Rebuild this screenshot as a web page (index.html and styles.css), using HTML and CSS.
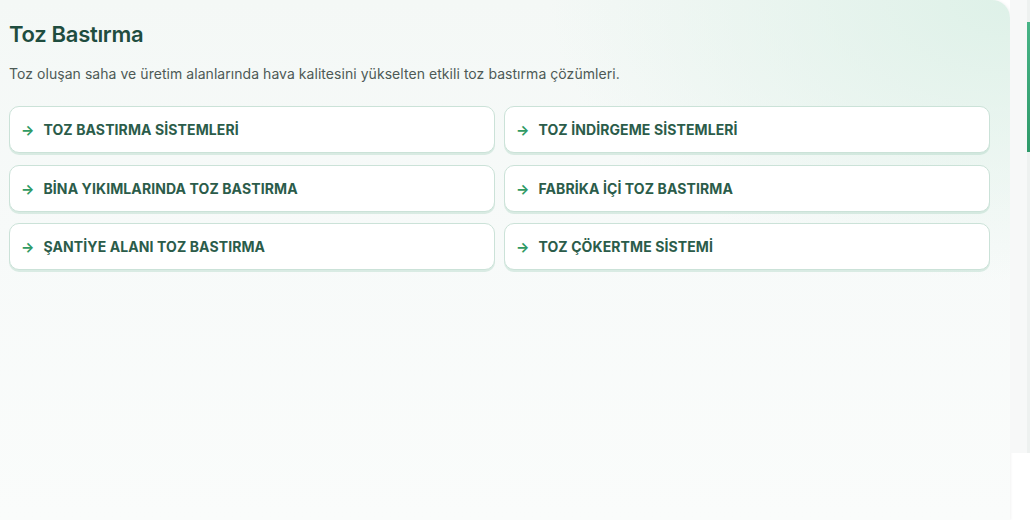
FILE: index.html
```html
<!DOCTYPE html>
<html lang="tr">
<head>
  <meta charset="UTF-8">
  <title>Toz Bastırma</title>
  <link rel="stylesheet" href="styles.css">
</head>
<body>
<div class="page">
  <!-- MAIN CARD -->
  <section class="panel">
    <h1>Toz Bastırma</h1>
    <p class="lead">Toz oluşan saha ve üretim alanlarında hava kalitesini yükselten etkili toz bastırma çözümleri.</p>
    <div class="links">
      <a class="link" href="#"><span class="arrow">→</span>TOZ BASTIRMA SİSTEMLERİ</a>
      <a class="link" href="#"><span class="arrow">→</span>TOZ İNDİRGEME SİSTEMLERİ</a>
      <a class="link" href="#"><span class="arrow">→</span>BİNA YIKIMLARINDA TOZ BASTIRMA</a>
      <a class="link" href="#"><span class="arrow">→</span>FABRİKA İÇİ TOZ BASTIRMA</a>
      <a class="link" href="#"><span class="arrow">→</span>ŞANTİYE ALANI TOZ BASTIRMA</a>
      <a class="link" href="#"><span class="arrow">→</span>TOZ ÇÖKERTME SİSTEMİ</a>
    </div>
  </section>

  <!-- SIDE RAIL -->
  <aside class="rail">
    <div class="track"><div class="thumb"></div></div>
  </aside>
</div>
</body>
</html>
```

FILE: styles.css
```css
:root{
  --green-dark:#1f4d3f;
  --green-text:#2b5c4a;
  --green-accent:#2f9a63;
  --muted:#4d5a56;
  --line:#cbe2d8;
}
*{box-sizing:border-box;margin:0;padding:0}
body{background:#fff;font-family:'Inter','Noto Sans',sans-serif;width:1030px;height:520px;overflow:hidden}
.page{display:flex;height:520px}
.panel{
  width:1010px;height:520px;
  padding:20px 20px 0 9px;
  border-top-right-radius:18px;
  background:
    radial-gradient(ellipse 460px 280px at 100% 0,#def1e8 0,rgba(222,241,232,0) 100%),
    linear-gradient(180deg,#f4f8f6 0,#f7faf9 45%,#fafcfb 100%);
  box-shadow:1px 0 3px rgba(0,0,0,.05);
}
h1{font-size:22px;font-weight:600;color:var(--green-dark);letter-spacing:-.3px;line-height:28px}
.lead{font-size:14px;color:var(--muted);margin-top:17px;line-height:18px;letter-spacing:.05px}
.links{display:grid;grid-template-columns:1fr 1fr;gap:11.5px 9px;margin-top:23px}
.link{
  display:flex;align-items:center;height:47px;padding:0 11px;
  background:#fff;border:1px solid var(--line);border-radius:10px;
  box-shadow:0 2px 0 rgba(160,205,185,.35);
  color:var(--green-text);font-size:14px;font-weight:700;text-decoration:none;letter-spacing:.1px
}
.arrow{color:var(--green-accent);font-weight:700;margin-right:9px;font-size:14px}
.rail{width:20px;height:453px;background:#f7f8f8;display:flex;justify-content:flex-end}
.track{width:3px;height:453px;background:#eef1f0;padding-top:22px}
.thumb{width:3px;height:130px;background:linear-gradient(180deg,#48b487,#2f9a6a)}
```
